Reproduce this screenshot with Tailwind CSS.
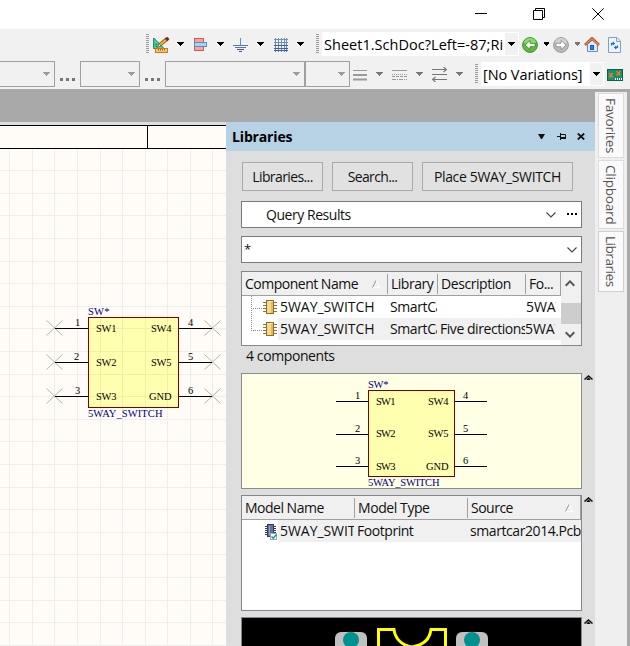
<!DOCTYPE html>
<html lang="en">
<head>
<meta charset="utf-8">
<title>Schematic editor</title>
<script src="https://cdn.jsdelivr.net/npm/@tailwindcss/browser@4"></script>
</head>
<body class="bg-white">
<svg width="0" height="0" class="absolute">
  <defs>
    <g id="caret"><path d="M0 0H7V1H6V2H5V3H4V4H3V3H2V2H1V1H0Z" fill="currentColor"/></g>
    <g id="chev"><path d="M0.5 0.5L5 5L9.5 0.5" fill="none" stroke="#444" stroke-width="1.1"/></g>
    <g id="collapse"><path d="M0.5 4.5L4.5 1L8.5 4.5M3 5L4.5 3.5L6 5" fill="none" stroke="#111" stroke-width="1.5"/></g>
    <g id="sort"><path d="M0.5 7.5L4 0.5" stroke="#999" fill="none"/><path d="M4.5 0.5L7.5 7.5H1" stroke="#fff" fill="none"/></g>
    <g id="grip"><path d="M1.5 0V20" stroke="#9a9a9a" stroke-width="3" stroke-dasharray="1 1"/></g>
    <g id="chip">
      <path d="M0 2.5H14M0 5.5H14M0 8.5H14M0 11.5H14" stroke="#8a7440"/>
      <rect x="3.5" y="0.5" width="7" height="13" fill="#f7d98b" stroke="#8f6d24"/><path d="M9 2V13" stroke="#e9b84e" stroke-width="2"/>
      <path d="M5.500 1.500H8.500" stroke="#fff0be"/>
    </g>
  </defs>
</svg>
<div class="flex h-[646px] w-[630px] flex-col overflow-hidden whitespace-nowrap font-['Open_Sans','Noto_Sans',sans-serif] text-[14px] tracking-[-0.5px] text-[#111]">

  <!-- window controls -->
  <div class="flex h-[29px] shrink-0 justify-end bg-white pr-[26px]">
    <svg class="mt-[13px] mr-[46px] h-[2px] w-[12px]" viewBox="0 0 12 2"><path d="M0 .5H12" stroke="#000"/></svg>
    <svg class="mt-[8px] mr-[47px] h-[12px] w-[12px]" viewBox="0 0 12 12" fill="none" stroke="#000"><path d="M.5 2.500H9.500V11.500H.5ZM2.500 2.500V.5H11.500V9.500H9.500"/></svg>
    <svg class="mt-[8px] h-[12px] w-[12px]" viewBox="0 0 12 12"><path d="M.3 .3L11.700 11.700M11.700 .3L.3 11.700" stroke="#000"/></svg>
  </div>

  <!-- main toolbar -->
  <div class="flex h-[31px] shrink-0 bg-[#f1f1f1] text-black">
    <svg class="mt-[5px] ml-[146px] h-[20px] w-[3px]"><use href="#grip"/></svg>
    <svg class="mt-[8px] ml-[4px] h-[16px] w-[17px]" viewBox="0 0 17 16">
      <path d="M.7 1L11 11.500H.7ZM3 6.500V9.500H6Z" fill="#3fe0a5" fill-rule="evenodd" stroke="#117a58"/>
      <path d="M6 8.500L14.500 1.500" stroke="#8a5a16" stroke-width="3.600"/><path d="M6 8.500L13 2.700" stroke="#f0b64a" stroke-width="2"/><path d="M13 3L15.500 1" stroke="#7a2b1c" stroke-width="3"/><path d="M4 10.500L6.500 6.800L8 9Z" fill="#fbe3a5" stroke="#6b4c17" stroke-width=".6"/>
      <rect x="2.500" y="11.500" width="12" height="4" fill="#f5c863" stroke="#c87a22"/><path d="M5.500 12V13.500M7.500 12V13.500M9.500 12V13.500M11.500 12V13.500" stroke="#9a6218"/>
    </svg>
    <svg class="mt-[13px] ml-[7px] h-[4px] w-[7px]"><use href="#caret"/></svg>
    <svg class="mt-[9px] ml-[10px] h-[13px] w-[13px]" viewBox="0 0 13 13"><rect x=".5" y=".5" width="9" height="12" fill="#f9a3a0" stroke="#cf5a58"/><rect x=".5" y="4.500" width="12" height="4" fill="#a9d3ef" stroke="#4a94c4"/></svg>
    <svg class="mt-[13px] ml-[10px] h-[4px] w-[7px]"><use href="#caret"/></svg>
    <svg class="mt-[9px] ml-[9px] h-[14px] w-[15px]" viewBox="0 0 15 14"><path d="M7.500 0V7" stroke="#5d8fc0"/><path d="M0 7.500H15M2 9.500H13" stroke="#5876ab"/><path d="M4 11.500H11M6 13.500H9" stroke="#3b5590"/></svg>
    <svg class="mt-[13px] ml-[9px] h-[4px] w-[7px]"><use href="#caret"/></svg>
    <svg class="mt-[9px] ml-[10px] h-[14px] w-[14px]" viewBox="0 0 14 14"><path d="M1.500 0V14M4.500 0V14M7.500 0V14M10.500 0V14M12.500 0V14M0 1.500H14M0 4.500H14" stroke="#6f93b8"/><path d="M0 7.500H14M0 10.500H14M0 12.500H14" stroke="#3f5f98"/></svg>
    <svg class="mt-[13px] ml-[9px] h-[4px] w-[7px]"><use href="#caret"/></svg>
    <svg class="mt-[5px] ml-[12px] h-[20px] w-[3px]"><use href="#grip"/></svg>
    <div class="mt-[3px] ml-[3px] flex h-[24px] w-[197px] bg-white">
      <div class="ml-[2px] w-[179px] overflow-hidden text-[14.5px] leading-[25px] tracking-[0.03px]">Sheet1.SchDoc?Left=-87;Ri</div>
      <div class="my-[1px] ml-[2px] w-[13px] bg-[#f1f1f1] pt-[9px] pl-[3px]"><svg class="block h-[4px] w-[7px]"><use href="#caret"/></svg></div>
    </div>
    <svg class="mt-[8px] ml-[3px] h-[16px] w-[16px]" viewBox="0 0 16 16"><circle cx="8" cy="8" r="7.400" fill="#5fbd3d" stroke="#3b8c2a"/><path d="M2 6A6 5 0 0 1 14 6Z" fill="#8bd96a"/><path d="M3 8L8 3.500V6.300H13V9.700H8V12.500Z" fill="#fff" stroke="#2f7d22" stroke-width=".8"/></svg>
    <svg class="mt-[13px] ml-[6px] h-[4px] w-[5px]" viewBox="1 0 5 4"><use href="#caret"/></svg>
    <svg class="mt-[8px] ml-[4px] h-[16px] w-[16px]" viewBox="0 0 16 16"><circle cx="8" cy="8" r="7.400" fill="#b9b9b9" stroke="#999"/><path d="M2 6A6 5 0 0 1 14 6Z" fill="#d2d2d2"/><path d="M13 8L8 3.500V6.300H3V9.700H8V12.500Z" fill="#fff" stroke="#888" stroke-width=".8"/></svg>
    <svg class="mt-[13px] ml-[6px] h-[4px] w-[5px] text-[#777]" viewBox="1 0 5 4"><use href="#caret"/></svg>
    <svg class="mt-[8px] ml-[4px] h-[16px] w-[16px]" viewBox="0 0 16 16"><path d="M3.500 7V14.500H13.500V7L8.500 3Z" fill="#dfeaf8" stroke="#6b8cc0"/><path d="M1 8L8 1.300L15 8" fill="none" stroke="#a84a1e" stroke-width="2.600"/><path d="M1.300 7.700L8 1.500L14.700 7.700" fill="none" stroke="#f08a4c" stroke-width="1.200"/><rect x="6.500" y="8.500" width="3" height="4" fill="#2b83e8" stroke="#1a5fc0"/></svg>
    <svg class="mt-[8px] ml-[8px] h-[16px] w-[13px]" viewBox="0 0 13 16"><path d="M.5 .5H9L12.500 4V15.500H.5Z" fill="#edf4fd" stroke="#7f9fd0"/><path d="M8.500 .5V4.500H12.500" fill="none" stroke="#7f9fd0"/><path d="M3.500 8.500V6.500H7M9.500 8.500V10.500H6" fill="none" stroke="#1b75d0" stroke-width="1.200"/><path d="M6 4.500V8.500L3 6.500ZM7 8.500V12.500L10 10.500Z" fill="#1b75d0"/></svg>
  </div>

  <!-- drawing style toolbar -->
  <div class="flex h-[29px] shrink-0 bg-[#f1f1f1] text-[#9c9c9c]">
    <div class="mt-[1px] -ml-[1px] flex h-[26px] w-[56px] justify-end border border-[#a0a0a0] pt-[10px] pr-[4px]"><svg class="h-[4px] w-[7px]"><use href="#caret"/></svg></div>
    <div class="mt-[18px] ml-[5px] flex gap-[3px]"><i class="h-[3px] w-[3px] bg-[#777]"></i><i class="h-[3px] w-[3px] bg-[#777]"></i><i class="h-[3px] w-[3px] bg-[#777]"></i></div>
    <div class="mt-[1px] ml-[5px] flex h-[26px] w-[60px] justify-end border border-[#a0a0a0] pt-[10px] pr-[4px]"><svg class="h-[4px] w-[7px]"><use href="#caret"/></svg></div>
    <div class="mt-[18px] ml-[5px] flex gap-[3px]"><i class="h-[3px] w-[3px] bg-[#777]"></i><i class="h-[3px] w-[3px] bg-[#777]"></i><i class="h-[3px] w-[3px] bg-[#777]"></i></div>
    <div class="mt-[1px] ml-[5px] flex h-[26px] w-[140px] justify-end border border-[#a0a0a0] pt-[10px] pr-[4px]"><svg class="h-[4px] w-[7px]"><use href="#caret"/></svg></div>
    <div class="mt-[1px] flex h-[26px] w-[45px] justify-end border border-[#a0a0a0] pt-[10px] pr-[4px]"><svg class="h-[4px] w-[7px]"><use href="#caret"/></svg></div>
    <svg class="mt-[10px] ml-[3px] h-[11px] w-[14px]" viewBox="0 0 14 11"><path d="M0 .5H14M0 4.500H14" stroke="#999"/><path d="M0 5H14M0 9.500H14" stroke="#999" stroke-width="2"/></svg>
    <svg class="mt-[12px] ml-[9px] h-[4px] w-[7px] text-[#777]"><use href="#caret"/></svg>
    <svg class="mt-[10px] ml-[9px] h-[11px] w-[15px]" viewBox="0 0 15 11" stroke="#999"><path d="M0 .5H15"/><path d="M0 4.500H15" stroke-dasharray="1 1"/><path d="M0 6.500H15" stroke-dasharray="3 1"/><path d="M0 9.500H15" stroke-dasharray="4 1 1 1"/></svg>
    <svg class="mt-[12px] ml-[9px] h-[4px] w-[7px] text-[#777]"><use href="#caret"/></svg>
    <svg class="mt-[7px] ml-[9px] h-[15px] w-[15px]" viewBox="0 0 15 15" fill="none" stroke="#777" stroke-width="1.200"><path d="M0 2.500H14M0 7.500H15M1 12.500H15M11.500 0L14.500 2.500L11.500 5M3.500 10L.5 12.500L3.500 15"/></svg>
    <svg class="mt-[12px] ml-[9px] h-[4px] w-[7px] text-[#777]"><use href="#caret"/></svg>
    <svg class="mt-[4px] ml-[12px] h-[20px] w-[3px]"><use href="#grip"/></svg>
    <div class="mt-[2px] ml-[3px] flex h-[24px] w-[123px] bg-white text-black">
      <div class="ml-[2px] w-[107px] text-[14.5px] leading-[25px] tracking-[-0.07px]">[No Variations]</div>
      <div class="my-[1px] w-[13px] bg-[#f1f1f1] pt-[9px] pl-[3px]"><svg class="block h-[4px] w-[7px]"><use href="#caret"/></svg></div>
    </div>
    <svg class="mt-[9px] ml-[3px] h-[12px] w-[16px]" viewBox="0 0 16 12"><rect x=".5" y=".5" width="15" height="11" fill="#12936f" stroke="#0a6048"/><path d="M2 4L6 8.500M6 4L2 8.500M9.500 2L13.500 6.500M13.500 2L9.500 6.500" stroke="#f57a1a" stroke-width="1.300"/><path d="M8 10H16" stroke="#fff" stroke-width="2" stroke-dasharray="1 1"/></svg>
  </div>

  <!-- workspace -->
  <div class="flex min-h-0 flex-1 bg-[#a9a9a9]">
    <div class="flex w-[595px] shrink-0 flex-col pt-[33px]">
      <div class="flex min-h-0 flex-1">

        <!-- schematic sheet -->
        <svg class="h-[524px] w-[226px] shrink-0 bg-[#fffcf7]" viewBox="0 122 226 524" font-family="Liberation Serif, serif" font-size="10.5">
          <path fill="none" stroke="#efeeea" d="M9.500 149V646M32.500 149V646M54.500 149V646M77.500 149V646M100.500 149V646M122.500 149V646M145.500 149V646M167.500 149V646M190.500 149V646M212.500 149V646M0 170.500H226M0 193.500H226M0 215.500H226M0 238.500H226M0 261.500H226M0 283.500H226M0 306.500H226M0 328.500H226M0 351.500H226M0 374.500H226M0 396.500H226M0 419.500H226M0 441.500H226M0 464.500H226M0 487.500H226M0 509.500H226M0 532.500H226M0 554.500H226M0 577.500H226M0 600.500H226M0 622.500H226M0 645.500H226"/>
          <rect x="0" y="122" width="226" height="3" fill="#dedede"/>
          <path d="M0 125.500H226M0 148.500H226M147.500 125V149" stroke="#000"/>
          <path stroke="#aeab9c" fill="none" stroke-width=".9" d="M46.500 320.500L62.500 335.500M62.500 320.500L46.500 335.500M46.500 354.500L62.500 369.500M62.500 354.500L46.500 369.500M46.500 388.500L62.500 403.500M62.500 388.500L46.500 403.500M204.500 320.500L220.500 335.500M220.500 320.500L204.500 335.500M204.500 354.500L220.500 369.500M220.500 354.500L204.500 369.500M204.500 388.500L220.500 403.500M220.500 388.500L204.500 403.500"/>
          <path stroke="#000" d="M55 328.500H88M55 362.500H88M55 396.500H88M179 328.500H212M179 362.500H212M179 396.500H212"/>
          <rect x="88.500" y="317.500" width="90" height="90" fill="#ffffb0" stroke="#800000"/>
          <path stroke="#f0f0a2" d="M100.500 318V407M122.500 318V407M145.500 318V407M167.500 318V407M89 328.500H178M89 351.500H178M89 374.500H178M89 396.500H178"/>
          <g fill="#000"><text x="96" y="332" textLength="20">SW1</text><text x="96" y="366" textLength="20">SW2</text><text x="96" y="400" textLength="20">SW3</text><text x="151" y="332" textLength="20">SW4</text><text x="151" y="366" textLength="20">SW5</text><text x="149" y="400" textLength="22">GND</text>
          <text x="75" y="326">1</text><text x="74" y="360">2</text><text x="75" y="394">3</text><text x="188" y="326">4</text><text x="188" y="360">5</text><text x="188" y="394">6</text></g>
          <g fill="#000080"><text x="88" y="315" textLength="21">SW*</text><text x="88" y="417" textLength="74">5WAY_SWITCH</text></g>
        </svg>

        <!-- libraries panel -->
        <div class="flex w-[369px] shrink-0 flex-col bg-[#dedede]">
          <div class="flex h-[29px] shrink-0 bg-[#b7d1e5] pl-[6px]">
            <div class="w-[306px] text-[14px] leading-[29px] font-bold tracking-[-0.15px] text-black">Libraries</div>
            <svg class="mt-[12px] h-[6px] w-[7px]" viewBox="0 0 7 6"><path d="M0 0H7L4 5H3Z" fill="#111"/></svg>
            <svg class="mt-[11px] ml-[12px] h-[7px] w-[10px]" viewBox="0 0 10 7"><path d="M0 3.500H3M3.500 0V7M4 1.500H8.500V5.500" stroke="#111" fill="none"/><path d="M4 5H9" stroke="#111" stroke-width="2"/></svg>
            <svg class="mt-[11px] ml-[10px] h-[7px] w-[8px]" viewBox="0 0 8 7"><path d="M.8 .5L7.200 6.500M7.200 .5L.8 6.500" stroke="#111" stroke-width="1.800"/></svg>
          </div>

          <div class="mt-[11px] ml-[16px] flex h-[29px] shrink-0 gap-[9px] text-center leading-[28px]">
            <div class="w-[81px] border border-[#a9a9a9] bg-[#e1e1e1] tracking-[-0.6px]">Libraries...</div>
            <div class="w-[81px] border border-[#a9a9a9] bg-[#e1e1e1] tracking-[-0.65px]">Search...</div>
            <div class="w-[151px] border border-[#a9a9a9] bg-[#e1e1e1] tracking-[-0.35px]">Place 5WAY_SWITCH</div>
          </div>

          <div class="mt-[10px] ml-[15px] flex h-[27px] w-[341px] shrink-0 border border-[#7a7a7a] bg-white pl-[24px] leading-[26px]">
            <div class="w-[280px] tracking-[-0.45px]">Query Results</div>
            <svg class="mt-[10px] h-[6px] w-[10px]"><use href="#chev"/></svg>
            <div class="mt-[11px] ml-[11px] flex gap-[2px]"><i class="h-[2px] w-[2px] bg-black"></i><i class="h-[2px] w-[2px] bg-black"></i><i class="h-[2px] w-[2px] bg-black"></i></div>
          </div>
          <div class="mt-[8px] ml-[15px] flex h-[27px] w-[341px] shrink-0 border border-[#7a7a7a] bg-white pl-[2px] leading-[25px]">
            <div class="w-[323px] text-[13px]">*</div>
            <svg class="mt-[10px] h-[6px] w-[10px]"><use href="#chev"/></svg>
          </div>

          <!-- component list -->
          <div class="mt-[8px] ml-[15px] flex h-[75px] w-[341px] shrink-0 border border-[#828790] bg-white">
            <div class="w-[319px] leading-[21px]">
              <div class="flex h-[24px] border-r border-b border-[#a0a0a0] bg-[#f0f0f0] pl-[3px] leading-[23px]">
                <div class="w-[127px] tracking-[-0.5px]">Component Name</div>
                <svg class="mt-[8px] h-[8px] w-[8px]"><use href="#sort"/></svg>
                <div class="mt-[2px] ml-[7px] h-[20px] w-[50px] border-l border-[#a0a0a0] pl-[3px] leading-[19px]">Library</div>
                <div class="mt-[2px] h-[20px] w-[88px] border-l border-[#a0a0a0] pl-[3px] leading-[19px] tracking-[-0.43px]">Description</div>
                <div class="mt-[2px] h-[20px] border-l border-[#a0a0a0] pl-[3px] leading-[19px]">Fo...</div>
              </div>
              <div class="flex h-[22px]">
                <svg class="h-[22px] w-[20px]"><path d="M9.500 0V22M11 12.500H20" stroke="#888" stroke-dasharray="1 1"/></svg>
                <svg class="mt-[4px] ml-[1px] h-[14px] w-[14px]"><use href="#chip"/></svg>
                <div class="ml-[1px] w-[109px] pl-[2px] tracking-[-0.05px]">5WAY_SWITCH</div>
                <div class="ml-[3px] w-[47px] overflow-hidden tracking-[-0.4px]">SmartCa</div>
                <div class="w-[88px]"></div>
                <div class="ml-[1px] w-[30px] overflow-hidden tracking-[-0.1px]">5WAY</div>
              </div>
              <div class="flex h-[22px]">
                <svg class="h-[22px] w-[20px]"><path d="M9.500 0V13M11 12.500H20" stroke="#888" stroke-dasharray="1 1"/></svg>
                <svg class="mt-[4px] ml-[1px] h-[14px] w-[14px]"><use href="#chip"/></svg>
                <div class="ml-[1px] flex w-[283px] bg-[#f0f0f0] pl-[2px]">
                  <div class="w-[107px] tracking-[-0.05px]">5WAY_SWITCH</div>
                  <div class="ml-[3px] w-[47px] overflow-hidden tracking-[-0.4px]">SmartCa</div>
                  <div class="ml-[3px] w-[85px] overflow-hidden tracking-[-0.45px]">Five directions</div>
                  <div class="ml-0 w-[30px] overflow-hidden tracking-[-0.1px]">5WAY</div>
                </div>
              </div>
            </div>
            <div class="w-[20px] bg-[#f0f0f0]">
              <svg class="mt-[8px] ml-[4px] block h-[7px] w-[10px]" viewBox="0 0 10 7"><path d="M.7 5.700L5 1.400L9.300 5.700" fill="none" stroke="#555" stroke-width="2"/></svg>
              <div class="mt-[16px] h-[21px] bg-[#cdcdcd]"></div>
              <svg class="mt-[7px] ml-[4px] block h-[7px] w-[10px]" viewBox="0 0 10 7"><path d="M.7 1.300L5 5.600L9.300 1.300" fill="none" stroke="#555" stroke-width="2"/></svg>
            </div>
          </div>

          <div class="ml-[20px] h-[27px] shrink-0 leading-[20px] tracking-[-0.4px]">4 components</div>

          <!-- symbol preview -->
          <div class="ml-[15px] flex h-[116px] shrink-0">
            <svg class="h-[116px] w-[341px] border border-[#8c8c8c] bg-[#ffffe6]" viewBox="242 374 339 114" font-family="Liberation Serif, serif" font-size="10.500">
              <path stroke="#000" d="M336 401.500H368M336 434.500H368M336 466.500H368M455 401.500H487M455 434.500H487M455 466.500H487"/>
              <rect x="368.500" y="390.500" width="86" height="86" fill="#ffffb0" stroke="#800000"/>
              <g fill="#000"><text x="376" y="405" textLength="19">SW1</text><text x="376" y="437" textLength="19">SW2</text><text x="376" y="470" textLength="19">SW3</text><text x="428" y="405" textLength="20">SW4</text><text x="428" y="437" textLength="20">SW5</text><text x="426" y="470" textLength="22">GND</text>
              <text x="355" y="399">1</text><text x="355" y="432">2</text><text x="355" y="464">3</text><text x="463" y="399">4</text><text x="463" y="432">5</text><text x="463" y="464">6</text></g>
              <g fill="#000080"><text x="368" y="388" textLength="20">SW*</text><text x="368" y="486" textLength="71">5WAY_SWITCH</text></g>
            </svg>
            <svg class="mt-[2px] ml-[2px] h-[5px] w-[9px]"><use href="#collapse"/></svg>
          </div>

          <!-- model list -->
          <div class="mt-[6px] ml-[15px] flex h-[116px] shrink-0">
            <div class="w-[341px] border border-[#828790] bg-white">
              <div class="flex h-[24px] border-r border-b border-[#a0a0a0] bg-[#f0f0f0] pl-[3px] leading-[23px]">
                <div class="w-[109px] tracking-[-0.5px]">Model Name</div>
                <div class="mt-[2px] h-[20px] w-[113px] border-l border-[#a0a0a0] pl-[3px] leading-[19px] tracking-[-0.42px]">Model Type</div>
                <div class="mt-[2px] h-[20px] w-[98px] border-l border-[#a0a0a0] pl-[3px] leading-[19px] tracking-[-0.5px]">Source</div>
                <svg class="mt-[8px] h-[8px] w-[8px]"><use href="#sort"/></svg>
              </div>
              <div class="flex h-[22px] leading-[21px]">
                <svg class="mt-[4px] ml-[23px] h-[17px] w-[12px]" viewBox="0 0 12 17"><path d="M0 2.500H11M0 4.500H11M0 6.500H11M0 8.500H11M0 10.500H11" stroke="#333a55"/><rect x="2.500" y=".5" width="6" height="12" fill="#66709a" stroke="#343c5c"/><path d="M4.500 2V11" stroke="#98a2c5"/><rect x="5.500" y="9.500" width="6" height="6" fill="#fff" stroke="#9aa"/><path d="M6.500 12.500L8.200 14.200L11.500 10.500" fill="none" stroke="#0c9494" stroke-width="1.400"/></svg>
                <div class="ml-[1px] flex w-[303px] bg-[#f0f0f0] pl-[2px]">
                  <div class="w-[74px] overflow-hidden tracking-[-0.05px]">5WAY_SWIT</div>
                  <div class="ml-[3px] w-[113px] tracking-[-0.45px]">Footprint</div>
                  <div class="w-[111px] overflow-hidden tracking-[-0.42px]">smartcar2014.Pcb</div>
                </div>
              </div>
            </div>
            <svg class="mt-[2px] ml-[2px] h-[5px] w-[9px]"><use href="#collapse"/></svg>
          </div>

          <!-- footprint preview -->
          <div class="mt-[6px] ml-[15px] flex h-[29px] shrink-0">
            <svg class="h-[29px] w-[341px] bg-black" viewBox="241 617 341 29"><path d="M241 617.500H582M241.500 617V646M581.500 617V646" stroke="#828790"/>
              <rect x="335" y="632" width="32" height="22" rx="6" fill="#c0c0c0"/><rect x="456" y="632" width="32" height="22" rx="6" fill="#c0c0c0"/>
              <circle cx="351" cy="640" r="8" fill="#009090"/><circle cx="472" cy="640" r="8" fill="#009090"/>
              <path d="M378.500 646V629.500H394C395 637 400 645 412 647C424 645 430 638 431 629.500H445.500V646" fill="none" stroke="#ff0" stroke-width="3"/>
            </svg>
            <svg class="mt-[2px] ml-[2px] h-[5px] w-[9px]"><use href="#collapse"/></svg>
          </div>
        </div>
      </div>
    </div>

    <!-- docked panel tabs -->
    <div class="mt-[3px] flex w-[32px] flex-col gap-[2px] bg-[#efefef] pt-[1px] pl-[3px] text-[13.5px] tracking-[-0.2px] text-[#555]">
      <div class="h-[65px] w-[26px] border border-[#dcdcdc] bg-[#fafafa] pt-[4px] leading-[24px] [writing-mode:vertical-rl]">Favorites</div>
      <div class="h-[69px] w-[26px] border border-[#dcdcdc] bg-[#fafafa] pt-[4px] leading-[24px] [writing-mode:vertical-rl]">Clipboard</div>
      <div class="h-[61px] w-[26px] border border-[#d0d0d0] bg-[#fafafa] pt-[4px] leading-[24px] tracking-[-0.45px] [writing-mode:vertical-rl]">Libraries</div>
    </div>
  </div>
</div>
</body>
</html>
